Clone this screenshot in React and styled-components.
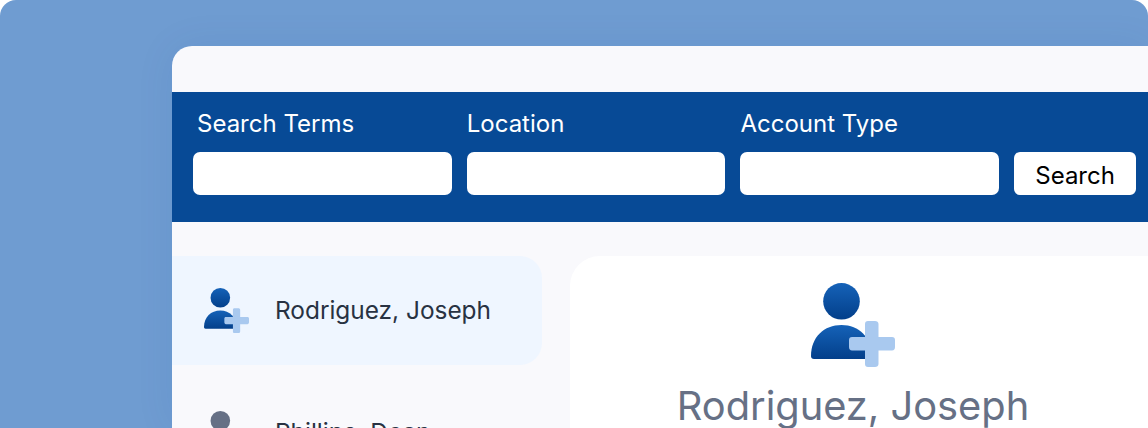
import React from 'react';
import styled, { createGlobalStyle } from 'styled-components';

const GlobalStyle = createGlobalStyle`
  html, body {
    margin: 0;
    padding: 0;
    background: #ffffff;
    overflow: hidden;
  }
  * {
    box-sizing: border-box;
  }
`;

const Backdrop = styled.div`
  width: 1148px;
  height: 428px;
  padding: 46px 0 0 172px;
  background: #6f9cd1;
  border-radius: 16px 16px 0 0;
  overflow: hidden;
  font-family: Inter, "Liberation Sans", sans-serif;
`;

const AppWindow = styled.div`
  width: 976px;
  height: 382px;
  padding-top: 46px;
  background: #f9f9fc;
  border-top-left-radius: 20px;
  box-shadow: 0 0 40px rgba(8, 74, 151, 0.07);
  overflow: hidden;
`;

const SearchBar = styled.form`
  height: 130px;
  padding: 16px 12px 0 21px;
  background: #074a96;
  display: flex;
  gap: 15px;
`;

const Field = styled.div`
  width: 259px;
  display: flex;
  flex-direction: column;
`;

const FieldLabel = styled.label`
  height: 44px;
  padding: 1px 0 0 ${(p) => (p.$indent ? '4px' : '0')};
  color: #ffffff;
  font-size: 24px;
  line-height: 30px;
`;

const TextInput = styled.div`
  height: 43px;
  background: #ffffff;
  border-radius: 7px;
`;

const SearchButton = styled.div`
  width: 122px;
  height: 43px;
  margin-top: 44px;
  padding-top: 4px;
  background: #ffffff;
  border-radius: 6px;
  color: #000000;
  font-size: 24px;
  display: flex;
  align-items: center;
  justify-content: center;
`;

const Body = styled.div`
  padding-top: 34px;
  display: flex;
  gap: 28px;
`;

const ContactList = styled.div`
  width: 370px;
  display: flex;
  flex-direction: column;
  gap: 14px;
`;

const ContactRow = styled.div`
  height: 109px;
  padding-left: 32px;
  display: flex;
  align-items: center;
  gap: 26px;
  flex-shrink: 0;
  background: ${(p) => (p.$active ? '#eff6ff' : 'transparent')};
  border-radius: 0 22px 22px 0;
`;

const ContactName = styled.span`
  padding-bottom: ${(p) => (p.$raised ? '4px' : '2px')};
  color: #283242;
  font-size: 24.4px;
`;

const DetailCard = styled.div`
  flex: 1;
  height: 300px;
  padding: 27px 12px 0 0;
  background: #ffffff;
  border-radius: 30px 0 0 0;
  display: flex;
  flex-direction: column;
  align-items: center;
`;

const DetailName = styled.div`
  margin-top: 15px;
  color: #667085;
  font-size: 39.8px;
  line-height: 48px;
`;

const UserPlus = ({ size, id, top, bottom, plus }) => (
  <svg width={size} height={size} viewBox="0 0 84 84" fill="none" style={{ flexShrink: 0 }}>
    <defs>
      <linearGradient id={id} x1="0" y1="0" x2="0" y2="1">
        <stop offset="0" stopColor={top} />
        <stop offset="1" stopColor={bottom} />
      </linearGradient>
    </defs>
    <circle cx="30.5" cy="18.3" r="18.3" fill={`url(#${id})`} />
    <path
      d="M0 73C0 54 13 42 30.5 42C48 42 61 54 61 76H3C1 76 0 75 0 73Z"
      fill={`url(#${id})`}
    />
    {plus && (
      <path
        d="M54 41C54 39 55 38 57 38H64C66 38 67.500 39 67.500 41V54H81C83 54 84 55 84 57V64C84 66 83 67.500 81 67.500H67.500V81C67.500 83 66 84 64 84H57C55 84 54 83 54 81V67.500H41C39 67.500 38 66 38 64V57C38 55 39 54 41 54H54Z"
        fill="#a9c9ef"
      />
    )}
  </svg>
);

const App = () => (
  <>
    <GlobalStyle />
    <Backdrop>
      <AppWindow>
        <SearchBar>
          <Field>
            <FieldLabel $indent>Search Terms</FieldLabel>
            <TextInput />
          </Field>
          <Field>
            <FieldLabel>Location</FieldLabel>
            <TextInput />
          </Field>
          <Field>
            <FieldLabel>Account Type</FieldLabel>
            <TextInput />
          </Field>
          <SearchButton>Search</SearchButton>
        </SearchBar>
        <Body>
          <ContactList>
            <ContactRow $active>
              <UserPlus size={45} id="rowIcon" top="#1562b8" bottom="#033f8a" plus />
              <ContactName>Rodriguez, Joseph</ContactName>
            </ContactRow>
            <ContactRow>
              <UserPlus size={45} id="rowIconGrey" top="#667085" bottom="#667085" />
              <ContactName $raised>Phillips, Dean</ContactName>
            </ContactRow>
          </ContactList>
          <DetailCard>
            <UserPlus size={84} id="cardIcon" top="#1562b8" bottom="#033f8a" plus />
            <DetailName>Rodriguez, Joseph</DetailName>
          </DetailCard>
        </Body>
      </AppWindow>
    </Backdrop>
  </>
);

export default App;
